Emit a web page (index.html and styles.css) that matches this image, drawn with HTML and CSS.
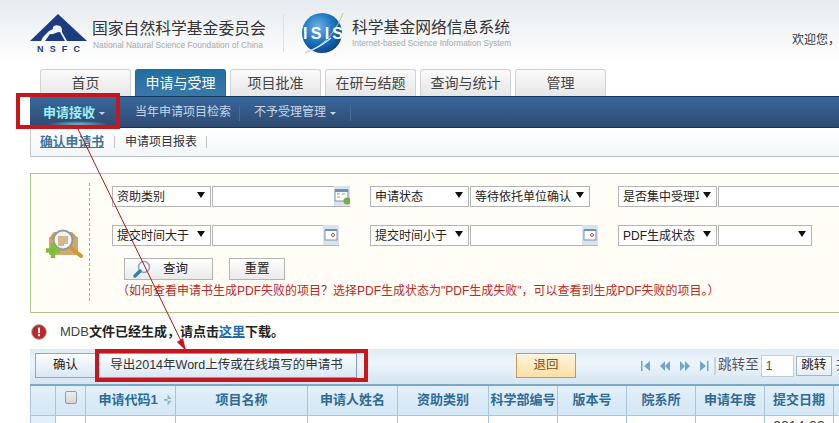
FILE: index.html
```html
<!DOCTYPE html>
<html lang="zh">
<head>
<meta charset="utf-8">
<title>科学基金网络信息系统</title>
<link rel="stylesheet" href="styles.css">
</head>
<body>
<div class="page">
  <header class="top">
    <svg class="logo-nsfc" viewBox="0 0 57 38" width="57" height="38">
      <path d="M28 0 L57 27 H37 L33 20 C31 17 33 14 30 12 C26 10 22 12 23 15 L19 17 L13 23 L11 27 H0 Z" fill="#1b3d80"/>
      <path d="M15 27 L20 20 C24 21 26 18 30 18 L35 27 Z" fill="#1b3d80"/>
      <text x="7" y="38" class="nsfc-text" textLength="43">NSFC</text>
    </svg>
    <div class="brand brand-a">
      <div class="brand-cn">国家自然科学基金委员会</div>
      <div class="brand-en">National Natural Science Foundation of China</div>
    </div>
    <div class="top-rule"></div>
    <svg class="logo-isis" viewBox="0 0 44 44" width="44" height="44">
      <defs>
        <radialGradient id="globe" cx="40%" cy="35%" r="70%">
          <stop offset="0" stop-color="#6fb4e8"/>
          <stop offset=".55" stop-color="#1b74c0"/>
          <stop offset="1" stop-color="#0b3f86"/>
        </radialGradient>
      </defs>
      <circle cx="21" cy="22" r="20" fill="url(#globe)"/>
      <path d="M4 42 C18 38 34 24 42 2" fill="none" stroke="#b9cf7c" stroke-width="1"/>
      <path d="M5 41 C16 38 24 32 30 27" fill="none" stroke="#d5e8f5" stroke-width="1.400"/>
      <text x="2" y="28" class="isis-text" textLength="40">ISIS</text>
    </svg>
    <div class="brand brand-b">
      <div class="brand-cn">科学基金网络信息系统</div>
      <div class="brand-en">Internet-based Science Information System</div>
    </div>
    <div class="welcome">欢迎您，</div>
  </header>

  <nav class="tabs">
    <a class="tab">首页</a>
    <a class="tab tab-on">申请与受理</a>
    <a class="tab">项目批准</a>
    <a class="tab">在研与结题</a>
    <a class="tab">查询与统计</a>
    <a class="tab">管理</a>
  </nav>

  <div class="mainbar">
    <a class="mitem mitem-on">申请接收<i class="caret"></i></a>
    <a class="mitem mitem-b">当年申请项目检索</a>
    <a class="mitem mitem-c">不予受理管理<i class="caret"></i></a>
  </div>

  <div class="subbar">
    <a class="sub sub-on">确认申请书</a>
    <a class="sub">申请项目报表</a>
  </div>

  <section class="panel">
    <div class="panel-icon">
      <svg viewBox="0 0 38 30" width="38" height="30">
        <path d="M3 9 L8 3 H26 L32 9 V26 H3 Z" fill="#c99f68"/>
        <path d="M3 10 H32 V26 H3 Z" fill="#d2a872"/>
        <circle cx="17" cy="11" r="9.500" fill="#eef3f4" stroke="#8f9aa0" stroke-width="2"/>
        <path d="M12 7 H22 V15 H18 V17 H12 Z" fill="#d8b78c"/>
        <path d="M25 19 L35 27" stroke="#d9942f" stroke-width="4" stroke-linecap="round"/>
        <path d="M7 14 V29 M0 21.500 H14" stroke="#7fc03a" stroke-width="4.500"/>
      </svg>
    </div>
    <div class="form">
      <div class="row">
        <div class="sel"><span class="sel-t">资助类别</span></div>
        <div class="inp w138"><svg class="cal" viewBox="0 0 16 20" width="16" height="20"><rect x="0" y="0" width="16" height="20" fill="#dbe3ea"/><rect x="1" y="4" width="13" height="11" fill="#fff" stroke="#7b93ad"/><rect x="1" y="3" width="13" height="3" fill="#6f93b8"/><path d="M3 8h3M8 8h3M3 11h3" stroke="#8a9cb0"/><circle cx="13" cy="15" r="3.500" fill="#6fb04a"/></svg></div>
        <div class="sel ml20"><span class="sel-t">申请状态</span></div>
        <div class="sel w120"><span class="sel-t">等待依托单位确认</span></div>
        <div class="sel ml28"><span class="sel-t">是否集中受理项目</span></div>
        <div class="inp w121"></div>
      </div>
      <div class="row row2">
        <div class="sel"><span class="sel-t">提交时间大于</span></div>
        <div class="inp w127"><svg class="cal" viewBox="0 0 16 20" width="16" height="20"><rect x="0" y="0" width="16" height="20" fill="#dbe3ea"/><rect x="2" y="5" width="12" height="10" fill="#fff" stroke="#7b93ad"/><rect x="2" y="4" width="12" height="2" fill="#6f93b8"/><circle cx="10" cy="10" r="1.500" fill="none" stroke="#b0504a"/></svg></div>
        <div class="sel ml31"><span class="sel-t">提交时间小于</span></div>
        <div class="inp w128"><svg class="cal" viewBox="0 0 16 20" width="16" height="20"><rect x="0" y="0" width="16" height="20" fill="#dbe3ea"/><rect x="2" y="5" width="12" height="10" fill="#fff" stroke="#7b93ad"/><rect x="2" y="4" width="12" height="2" fill="#6f93b8"/><circle cx="10" cy="10" r="1.500" fill="none" stroke="#b0504a"/></svg></div>
        <div class="sel ml20"><span class="sel-t">PDF生成状态</span></div>
        <div class="sel w94"></div>
      </div>
      <div class="actions">
        <button class="btn btn-q"><svg viewBox="0 0 18 18" width="18" height="18"><circle cx="11" cy="7" r="5.500" fill="#eef5f8" stroke="#9aa5ac" stroke-width="1.500"/><path d="M7 11 L2 16" stroke="#2f7fb5" stroke-width="3.400" stroke-linecap="round"/></svg><span>查询</span></button>
        <button class="btn btn-r">重置</button>
      </div>
      <p class="hint">（如何查看申请书生成PDF失败的项目？选择PDF生成状态为"PDF生成失败"，可以查看到生成PDF失败的项目。）</p>
    </div>
  </section>

  <div class="msg">
    <svg viewBox="0 0 16 16" width="16" height="16"><circle cx="8" cy="8" r="7.500" fill="#a33" stroke="#b9b9b9"/><circle cx="8" cy="8" r="5.600" fill="#c8232a"/><rect x="7" y="3.600" width="2" height="5.600" fill="#fff"/><rect x="7" y="10.200" width="2" height="2" fill="#fff"/></svg>
    <span class="msg-t"><span class="mdb">MDB</span>文件已经生成，请点击<a class="msg-link">这里</a>下载。</span>
  </div>

  <div class="toolbar">
    <button class="tb tb-ok">确认</button>
    <button class="tb tb-export">导出2014年Word上传或在线填写的申请书</button>
    <button class="tb tb-back">退回</button>
    <div class="pager">
      <svg viewBox="0 0 70 12" width="70" height="12"><path d="M1 1v10h1.500V1zM10 1L4 6l6 5zM25 1l-5 5 5 5zM30 1l-5 5 5 5zM40 1l5 5-5 5zM45 1l5 5-5 5zM60 1l6 5-6 5zM67 1v10h1.500V1z" fill="#6fa5d2"/></svg>
      <i class="pager-sep"></i>
      <span class="jump">跳转至</span>
      <span class="page-no">1</span>
      <button class="go">跳转</button>
      <span class="jump total">共</span>
    </div>
  </div>

  <table class="grid">
    <colgroup>
      <col class="c25"><col class="c30"><col class="c90"><col class="c132"><col class="c90"><col class="c91"><col class="c69"><col class="c69"><col class="c69"><col class="c69"><col class="c69"><col class="c6">
    </colgroup>
    <thead>
      <tr>
        <th></th>
        <th><i class="check"></i></th>
        <th class="sortable">申请代码1<i class="sort"></i></th>
        <th>项目名称</th>
        <th>申请人姓名</th>
        <th>资助类别</th>
        <th>科学部编号</th>
        <th>版本号</th>
        <th>院系所</th>
        <th>申请年度</th>
        <th>提交日期</th>
        <th></th>
      </tr>
    </thead>
    <tbody>
      <tr><td></td><td></td><td></td><td></td><td></td><td></td><td></td><td></td><td></td><td></td><td class="date">2014-03</td><td></td></tr>
    </tbody>
  </table>

  <div class="mark mark-a"></div>
  <div class="mark mark-b"></div>
  <svg class="arrow" viewBox="0 0 839 423" width="839" height="423">
    <line x1="78" y1="129" x2="183" y2="345" stroke="#a01a20" stroke-width="1"/>
    <path d="M177 342 L183 338 L186 351 Z" fill="#c8161d"/>
  </svg>
</div>
</body>
</html>
```
FILE: styles.css
```css
* { box-sizing: border-box; }
html, body { margin: 0; padding: 0; height: 100%; overflow: hidden; background: #fff; }
body { font: 12px/1.2 "Liberation Sans", "Noto Sans CJK SC", sans-serif; color: #222; }
.page { position: relative; width: 839px; height: 423px; overflow: hidden; }
a { color: inherit; text-decoration: none; }
i { font-style: normal; }
button { font: inherit; color: inherit; padding: 0; cursor: pointer; }

/* header */
.top { height: 69px; display: flex; align-items: flex-start; padding-left: 30px; background: linear-gradient(#e6ebef, #fff 62px); }
.logo-nsfc { margin-top: 14px; flex: none; }
.nsfc-text { font: bold 9px "Liberation Sans", sans-serif; fill: #1b3d80; }
.brand { flex: none; }
.brand-a { margin: 19px 0 0 5px; width: 191px; }
.brand-a .brand-en { margin-left: 1px; }
.brand-b { margin: 18px 0 0 7px; width: 200px; }
.brand-cn { font-size: 15.8px; line-height: 20px; color: #333; white-space: nowrap; }
.brand-b .brand-cn { font-size: 15.8px; }
.brand-en { font-size: 8.4px; line-height: 12px; color: #a5a9ad; white-space: nowrap; }
.brand-b .brand-en { font-size: 8.3px; line-height: 10px; }
.top-rule { width: 1px; height: 38px; margin-top: 14px; background: #dfe3e6; flex: none; }
.logo-isis { margin: 11px 0 0 17px; flex: none; }
.isis-text { font: bold 16px "Liberation Sans", sans-serif; fill: #fff; }
.welcome { margin: 33px 0 0 240px; color: #333; white-space: nowrap; }

/* tabs */
.tabs { height: 27px; display: flex; gap: 4px; padding-left: 40px; }
.tab { width: 91px; height: 27px; display: flex; align-items: center; justify-content: center; padding-top: 1px; font-size: 14px; color: #444; border: 1px solid #cfd3d5; border-bottom: 0; border-radius: 3px 3px 0 0; background: linear-gradient(#fbfbfb, #e6e6e6); }
.tab-on { color: #fff; border-color: #2d6494; background: linear-gradient(#20709f, #3a79a8); }

/* main bar */
.mainbar { position: relative; height: 32px; margin-left: 30px; padding-top: 1px; display: flex; align-items: center; border-top: 1px solid #16395f; border-bottom: 1px solid #1d3552; background: linear-gradient(#37689c, #2f4a70); color: #c6d5e6; }
.mainbar::before { content: ""; position: absolute; left: 18px; bottom: 0; width: 60px; height: 6px; background: radial-gradient(closest-side, rgba(130, 225, 240, .75), rgba(130, 225, 240, 0)); }
.mitem { display: flex; align-items: center; height: 16px; white-space: nowrap; border-right: 1px solid #4d6e93; }
.mitem-on { width: 88px; padding-left: 13px; font-size: 13px; font-weight: bold; color: #9df0f3; border-right-color: transparent; }
.mitem-b { width: 122px; padding-left: 17px; }
.mitem-c { width: 111px; padding-left: 14px; }
.caret { width: 0; height: 0; margin-left: 4px; margin-top: 1px; border: 3.5px solid transparent; border-top-color: #c6d5e6; border-bottom: 0; }

/* sub bar */
.subbar { height: 29px; margin-left: 30px; display: flex; align-items: center; padding-left: 9px; border-left: 1px solid #c5cacd; border-bottom: 1px solid #b8c0c4; background: linear-gradient(#fff, #f2f6f9); }
.sub { display: block; height: 12px; line-height: 12px; padding-right: 9px; margin-right: 10px; border-right: 1px solid #c5c5c5; color: #333; white-space: nowrap; }
.sub-on { padding-right: 10px; color: #3f7599; font-weight: bold; font-size: 12.8px; text-decoration: underline; }

/* search panel */
.panel { width: 809px; height: 140px; margin: 16px 0 0 30px; display: flex; border: 1px solid #a7cb8a; border-right: 0; border-bottom-color: #b5c58a; background: #fffdf6; }
.panel-icon { width: 58px; flex: none; padding: 55px 0 0 15px; }
.form { flex: 1; min-width: 0; margin: 9px 0 11px; padding: 3px 0 0 22px; border-left: 1px dashed #a9a9a9; }
.row { display: flex; gap: 1px; height: 21px; }
.row2 { margin-top: 18px; }
.sel { position: relative; flex: none; width: 99px; height: 21px; padding: 1px 0 0 4px; font-size: 12px; line-height: 19px; color: #222; background: #fff; border: 1px solid #b5b5b5; }
.sel-t { display: block; width: 76px; height: 19px; overflow: hidden; white-space: nowrap; }
.w120 .sel-t { width: 99px; }
.sel::after { content: ""; position: absolute; right: 5px; top: 5px; border: 4px solid transparent; border-top: 6px solid #111; border-bottom: 0; }
.w120 { width: 120px; }
.w94 { width: 94px; }
.ml20 { margin-left: 19px; }
.ml28 { margin-left: 27px; }
.ml31 { margin-left: 30px; }
.inp { position: relative; flex: none; height: 21px; background: #fff; border: 1px solid #b5b5b5; }
.w138 { width: 138px; }
.w127 { width: 127px; }
.w128 { width: 128px; }
.w121 { width: 121px; border-right: 0; }
.cal { position: absolute; right: -1px; top: -1px; }
.actions { display: flex; gap: 16px; margin: 12px 0 0 12px; }
.btn { height: 22px; border: 1px solid #b5b5b5; background: linear-gradient(#fff, #eaeaea); display: flex; align-items: center; justify-content: center; font-size: 12.5px; color: #222; }
.btn-q { width: 89px; justify-content: flex-start; padding-left: 8px; gap: 12px; }
.btn-r { width: 56px; }
.hint { margin: 4px 0 0 5px; font-size: 12px; line-height: 14px; color: #bb2a24; white-space: nowrap; }

/* message */
.msg { height: 36px; display: flex; align-items: center; padding: 1px 0 0 31px; gap: 13px; }
.msg-t { font-size: 13px; font-weight: bold; color: #222; white-space: nowrap; }
.mdb { font-weight: normal; color: #444; }
.msg-link { color: #1b6db0; text-decoration: underline; }

/* toolbar */
.toolbar { height: 35px; margin-left: 30px; display: flex; align-items: flex-start; padding: 4px 0 0 5px; background: linear-gradient(#dcebf6, #eef5fa 40%, #d5e5f2); }
.tb { height: 25px; font-size: 12.5px; white-space: nowrap; flex: none; }
.tb-ok { width: 61px; border: 1px solid #8ba9c4; background: linear-gradient(#fdfeff, #d9e8f4); }
.tb-export { width: 261px; border: 1px solid #7f9ebb; background: linear-gradient(#fdfeff, #d9e8f4); color: #333; }
.tb-back { width: 60px; margin-left: 159px; border: 1px solid #c59a58; background: linear-gradient(#fff5de, #fbdfa8); color: #8a4a12; }
.pager { display: flex; align-items: center; height: 25px; margin-left: 64px; flex: none; }
.pager svg { flex: none; }
.pager-sep { width: 2px; height: 18px; margin-left: 4px; background: #c9d3db; }
.jump { font-size: 13.6px; color: #556; margin-left: 2px; white-space: nowrap; }
.page-no { width: 33px; height: 22px; margin-left: 2px; padding-left: 4px; line-height: 20px; background: #fff; border: 1px solid #b9cfe0; color: #554; font-size: 12px; }
.go { width: 36px; height: 20px; margin-left: 2px; border: 1px solid #9fb6c9; background: linear-gradient(#fff, #e6edf3); font-size: 12.5px; }
.total { margin-left: 4px; }

/* grid */
.grid { width: 809px; table-layout: fixed; margin-left: 30px; border-collapse: collapse; border-top: 2px solid #7ba7c9; }
.grid th, .grid td { padding: 0; border: 1px solid #a6c6dd; border-top: 0; text-align: center; white-space: nowrap; overflow: hidden; }
.grid th { height: 30px; font-size: 13px; font-weight: bold; color: #2e6b98; background: linear-gradient(#e2eff8, #d3e7f5); }
.grid th.sortable { padding-left: 9px; }
.grid td { height: 30px; font-size: 14px; vertical-align: top; color: #444; }
.grid tbody td:first-child { background: #e4f0f8; }
.c6 { width: 6px; }
.c25 { width: 25px; }
.c30 { width: 30px; }
.c90 { width: 90px; }
.c91 { width: 91px; }
.c132 { width: 132px; }
.c69 { width: 69px; }
.check { display: block; width: 12px; height: 13px; margin: 0 auto 5px; border: 1px solid #999; border-radius: 2px; background: linear-gradient(#eee, #d5d5d5); }
.sort { display: inline-block; width: 8px; height: 11px; margin-left: 6px; vertical-align: -1px; background: #8fb3cc; clip-path: polygon(50% 0, 100% 42%, 0 42%, 0 58%, 100% 58%, 50% 100%); }
.date { padding-top: 2px !important; }

/* annotations */
.mark { position: absolute; border: 4px solid #c8161d; }
.mark-a { left: 16px; top: 93px; width: 104px; height: 36px; }
.mark-b { left: 95px; top: 349px; width: 273px; height: 33px; }
.arrow { position: absolute; left: 0; top: 0; pointer-events: none; }
```
